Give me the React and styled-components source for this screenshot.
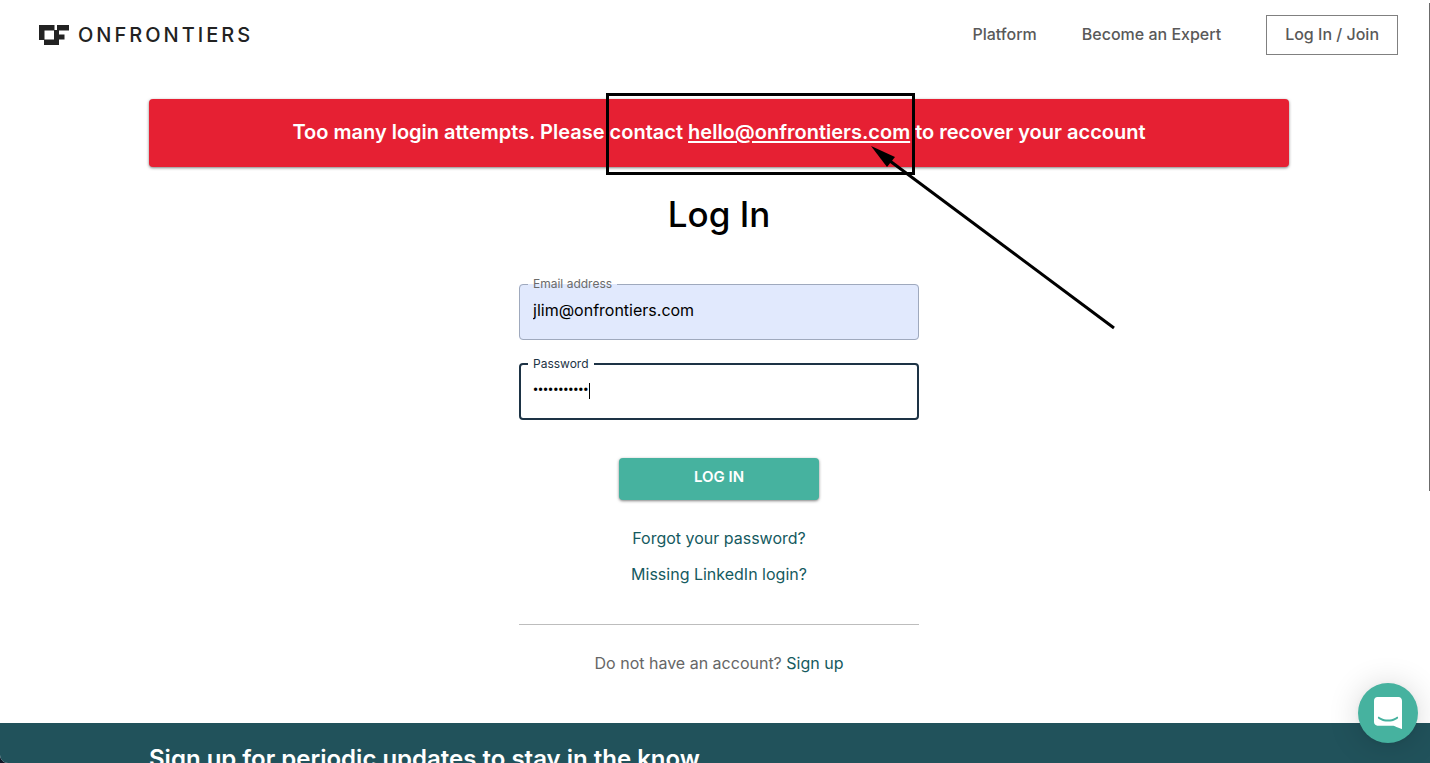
import React, { useState } from "react";
import styled, { createGlobalStyle } from "styled-components";

const GlobalStyle = createGlobalStyle`
  * {
    box-sizing: border-box;
  }

  body {
    margin: 0;
    background: #101828;
    font-family: Inter, "Liberation Sans", sans-serif;
    font-size: 16px;
    line-height: 24px;
    color: #000;
  }
`;

const Page = styled.div`
  position: relative;
  display: flex;
  flex-direction: column;
  height: 100vh;
  overflow: hidden;
  background: #fff;
  border-bottom-left-radius: 8px;
`;

const Header = styled.header`
  display: flex;
  justify-content: space-between;
  align-items: center;
  flex-shrink: 0;
  padding: 15px 32px 15px 39px;
`;

const Brand = styled.a`
  display: flex;
  align-items: center;
  gap: 9px;
  color: #222;
  font-size: 20px;
  font-weight: 500;
  letter-spacing: 3px;
  text-decoration: none;
`;

const Nav = styled.nav`
  display: flex;
  align-items: center;
  gap: 45px;
`;

const NavLink = styled.a`
  padding-bottom: 2px;
  color: #595959;
  font-size: 16px;
  font-weight: 500;
  text-decoration: none;
`;

const JoinLink = styled(NavLink)`
  padding: 6px 18px 8px;
  border: 1px solid #808080;
`;

const Main = styled.main`
  display: flex;
  flex-direction: column;
  align-items: center;
  flex-shrink: 0;
  padding: 29px 141px 48px 149px;
`;

const Alert = styled.div`
  position: relative;
  width: 100%;
  max-width: 1140px;
  padding: 21px 24px 23px;
  border-radius: 4px;
  background: #e62033;
  box-shadow: 0 1px 3px rgba(0, 0, 0, 0.5);
  color: #fff;
  font-size: 20px;
  font-weight: 600;
  text-align: center;

  a {
    color: inherit;
    text-decoration-thickness: 2px;
    text-underline-offset: 2px;
  }
`;

// marker drawn over the alert and the space below it
const Markup = styled.svg`
  position: absolute;
  top: -6px;
  left: calc(50% - 113px);
  overflow: visible;
  pointer-events: none;
`;

const Title = styled.h1`
  margin: 23px 0 39px;
  font-size: 35px;
  font-weight: 500;
  line-height: 48px;
`;

const Form = styled.form`
  display: flex;
  flex-direction: column;
  align-items: center;
  width: 100%;
  max-width: 400px;
`;

const Field = styled.fieldset`
  width: 100%;
  min-width: 0;
  margin: 0 0 17px;
  padding: 0 12px ${({ $active }) => ($active ? 9 : 10)}px ${({ $active }) => ($active ? 7 : 8)}px;
  border: ${({ $active }) => ($active ? "2px solid #1d3345" : "1px solid #9fa9bd")};
  border-radius: 4px;
  background: ${({ $filled }) => ($filled ? "#e1e9fd" : "#fff")};
`;

const Legend = styled.legend`
  padding: 0 5px;
  color: ${({ $active }) => ($active ? "#1d3345" : "#6b6b6b")};
  font-size: 12px;
  line-height: 14px;
`;

const InputRow = styled.div`
  position: relative;
  padding-left: 5px;
`;

const Input = styled.input`
  display: block;
  width: 100%;
  height: 38px;
  padding: 0;
  border: 0;
  outline: 0;
  background: transparent;
  color: #000;
  font-family: inherit;
  font-size: 16px;
`;

const PasswordInput = styled(Input)`
  font-family: Roboto, sans-serif;
  font-size: 14px;
  font-weight: 700;
`;

const Caret = styled.span`
  position: absolute;
  top: 12px;
  left: 61px;
  width: 1px;
  height: 16px;
  background: #000;
`;

const Submit = styled.button`
  width: 200px;
  margin: 21px 0 26px;
  padding: 7px 16px 11px;
  border: 0;
  border-radius: 4px;
  background: #46b29f;
  box-shadow: 0 1px 3px rgba(0, 0, 0, 0.5);
  color: #fff;
  font-family: inherit;
  font-size: 15px;
  font-weight: 600;
  line-height: 24px;
  cursor: pointer;
`;

const TextLink = styled.a`
  color: #155a60;
  text-decoration: none;
`;

const HelpLinks = styled.div`
  display: flex;
  flex-direction: column;
  align-items: center;
  gap: 12px;
`;

const SignUp = styled.p`
  width: 100%;
  max-width: 400px;
  margin: 38px 0 0;
  padding-top: 26px;
  border-top: 1px solid #bdbdbd;
  color: #666;
  text-align: center;
`;

const Footer = styled.footer`
  flex: 1 0 auto;
  padding: 20px 141px 20px 149px;
  background: #21525b;
  color: #fff;
`;

const FooterTitle = styled.h2`
  max-width: 1140px;
  margin: 0 auto;
  font-size: 24px;
  font-weight: 600;
  line-height: 32px;
`;

const ChatButton = styled.button`
  position: fixed;
  right: 12px;
  bottom: 20px;
  display: flex;
  align-items: center;
  justify-content: center;
  width: 60px;
  height: 60px;
  padding: 0;
  border: 0;
  border-radius: 50%;
  background: #46b29f;
  box-shadow: 0 1px 6px rgba(0, 0, 0, 0.06), 0 2px 32px rgba(0, 0, 0, 0.16);
  cursor: pointer;
`;

const ScrollThumb = styled.div`
  position: fixed;
  top: 3px;
  right: 0;
  width: 1px;
  height: 64vh;
  background: #6b6b6b;
`;

const LogoMark = () => (
  <svg width="30" height="20" viewBox="0 0 30 20" fill="#222" aria-hidden="true">
    <path
      fillRule="evenodd"
      d="M0 0H15.5V5H18V0H30V5.5H20V9.5H25.5V14.5H20V20H5V15H0ZM5.5 5.5H15V14.5H5.5Z"
    />
  </svg>
);

const ChatIcon = () => (
  <svg width="28" height="32" viewBox="0 0 28 32" fill="#fff" aria-hidden="true">
    <path d="M28 32s-4.714-1.855-8.527-3.34H3.437C1.54 28.66 0 27.026 0 25.013V3.644C0 1.633 1.54 0 3.437 0h21.125c1.898 0 3.437 1.632 3.437 3.645v18.404H28V32zm-4.139-11.982a.88.88 0 00-1.292-.105c-.03.026-3.015 2.681-8.57 2.681-5.486 0-8.517-2.636-8.571-2.684a.88.88 0 00-1.29.107 1.01 1.01 0 00-.219.708.992.992 0 00.318.664c.142.128 3.537 3.15 9.762 3.15 6.226 0 9.621-3.022 9.763-3.15a.992.992 0 00.317-.664 1.01 1.01 0 00-.218-.707z" />
  </svg>
);

const App = () => {
  const [email, setEmail] = useState("jlim@onfrontiers.com");
  const [password, setPassword] = useState("password123");

  return (
    <>
      <GlobalStyle />
      <Page>
        <Header>
          <Brand href="#">
            <LogoMark />
            ONFRONTIERS
          </Brand>
          <Nav>
            <NavLink href="#platform">Platform</NavLink>
            <NavLink href="#expert">Become an Expert</NavLink>
            <JoinLink href="#login">Log In / Join</JoinLink>
          </Nav>
        </Header>

        <Main>
          <Alert role="alert">
            Too many login attempts. Please contact{" "}
            <a href="mailto:hello@onfrontiers.com">hello@onfrontiers.com</a> to
            recover your account
            <Markup width="309" height="82" aria-hidden="true">
              <rect x="1.5" y="1.5" width="306" height="79" fill="none" stroke="#000" strokeWidth="3" />
              <path d="M284 68L508 235" stroke="#000" strokeWidth="3" />
              <path d="M265 53L289 64L281 74Z" />
            </Markup>
          </Alert>

          <Title>Log In</Title>

          <Form onSubmit={(e) => e.preventDefault()}>
            <Field $filled>
              <Legend>
                <label htmlFor="email">Email address</label>
              </Legend>
              <InputRow>
                <Input
                  id="email"
                  type="email"
                  value={email}
                  onChange={(e) => setEmail(e.target.value)}
                />
              </InputRow>
            </Field>
            <Field $active>
              <Legend $active>
                <label htmlFor="password">Password</label>
              </Legend>
              <InputRow>
                <PasswordInput
                  id="password"
                  type="password"
                  value={password}
                  onChange={(e) => setPassword(e.target.value)}
                />
                <Caret />
              </InputRow>
            </Field>
            <Submit type="submit">LOG IN</Submit>
          </Form>

          <HelpLinks>
            <TextLink href="#forgot">Forgot your password?</TextLink>
            <TextLink href="#linkedin">Missing LinkedIn login?</TextLink>
          </HelpLinks>

          <SignUp>
            Do not have an account? <TextLink href="#signup">Sign up</TextLink>
          </SignUp>
        </Main>

        <Footer>
          <FooterTitle>Sign up for periodic updates to stay in the know.</FooterTitle>
        </Footer>

        <ScrollThumb />
        <ChatButton type="button" aria-label="Open chat">
          <ChatIcon />
        </ChatButton>
      </Page>
    </>
  );
};

export default App;
